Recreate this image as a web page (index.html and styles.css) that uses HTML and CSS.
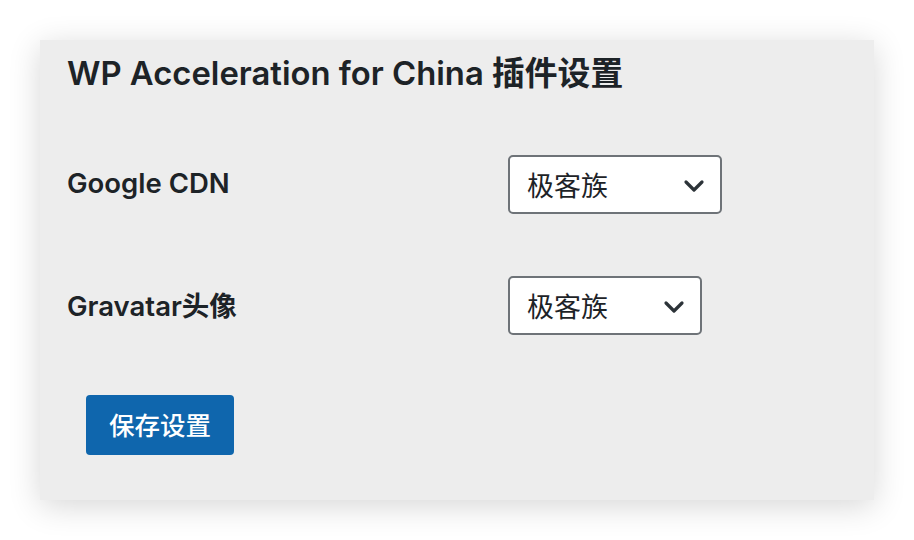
FILE: index.html
```html
<!DOCTYPE html>
<html lang="zh">
<head>
<meta charset="utf-8">
<link rel="stylesheet" href="styles.css">
</head>
<body>
<div class="panel">
  <h1 class="title">WP Acceleration for China 插件设置</h1>
  <div class="form">
    <div class="row">
      <div class="label">Google CDN</div>
      <div class="select select-wide"><span class="value">极客族</span>
        <svg class="chev" width="22" height="14" viewBox="0 0 22 14"><path d="M3 3 L11 11 L19 3" fill="none" stroke="#2c3338" stroke-width="3.2" stroke-linecap="round" stroke-linejoin="round"/></svg>
      </div>
    </div>
    <div class="row">
      <div class="label">Gravatar头像</div>
      <div class="select select-narrow"><span class="value">极客族</span>
        <svg class="chev" width="22" height="14" viewBox="0 0 22 14"><path d="M3 3 L11 11 L19 3" fill="none" stroke="#2c3338" stroke-width="3.2" stroke-linecap="round" stroke-linejoin="round"/></svg>
      </div>
    </div>
  </div>
  <div class="actions">
    <button class="btn">保存设置</button>
  </div>
</div>
</body>
</html>
```
FILE: styles.css
```css
html, body {
  margin: 0;
  padding: 0;
  background: #ffffff;
  width: 914px;
  height: 540px;
  overflow: hidden;
}
body {
  padding: 40px;
  box-sizing: border-box;
  font-family: Inter, "Noto Sans CJK SC", sans-serif;
  color: #1d2327;
}
.panel {
  width: 834px;
  height: 460px;
  background: #ededed;
  box-shadow: 0 6px 30px rgba(0,0,0,0.16);
  box-sizing: border-box;
  padding: 0 0 0 27px;
}
.title {
  margin: 0;
  font-size: 32.8px;
  font-weight: 600;
  line-height: 40px;
  height: 40px;
  padding-top: 13px;
}
.form {
  display: flex;
  flex-direction: column;
  gap: 62px;
  margin-top: 62px;
}
.row {
  display: grid;
  grid-template-columns: 441px auto;
  align-items: center;
  height: 59px;
}
.label {
  font-size: 27.5px;
  font-weight: 600;
  margin-top: -4px;
}
.select {
  box-sizing: border-box;
  height: 59px;
  border: 2px solid #6e7378;
  border-radius: 5px;
  background: #ffffff;
  display: flex;
  align-items: center;
  padding-left: 17px;
  position: relative;
}
.select-wide { width: 214px; }
.select-narrow { width: 194px; }
.value {
  font-size: 27px;
  color: #1d2327;
}
.chev {
  position: absolute;
  right: 15px;
  top: 22px;
}
.actions {
  margin-top: 60px;
  padding-left: 19px;
}
.btn {
  width: 148px;
  height: 60px;
  background: #0f66ad;
  color: #ffffff;
  border: none;
  border-radius: 4px;
  font-family: "Noto Sans CJK SC", sans-serif;
  font-size: 25.5px;
  font-weight: 500;
  padding: 0 0 4px 0;
}
```
